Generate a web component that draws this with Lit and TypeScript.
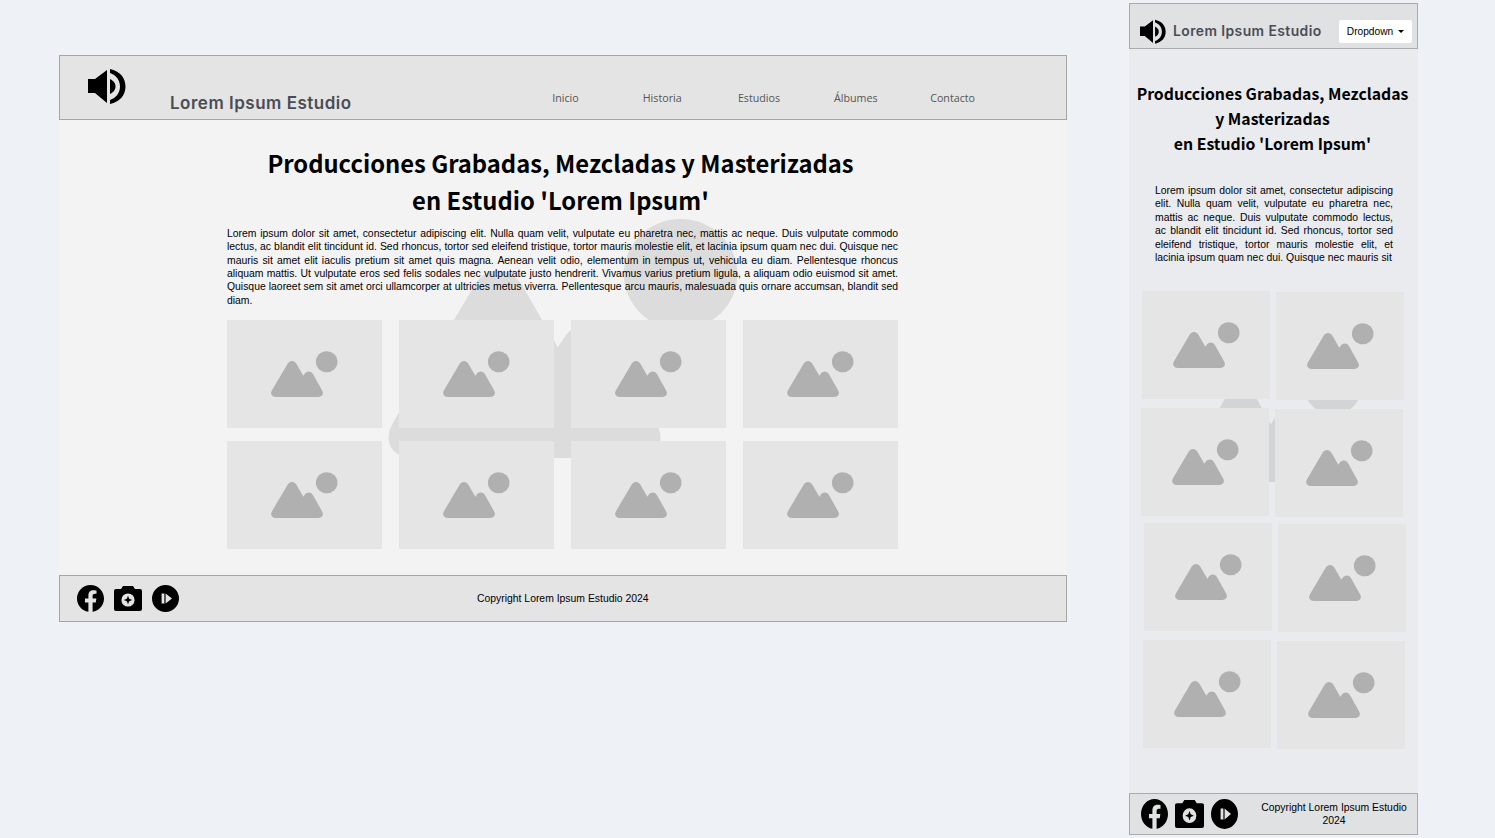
import { LitElement, html, css, svg } from "lit";
import { customElement } from "lit/decorators.js";

const TEXT_DESK =
  "Lorem ipsum dolor sit amet, consectetur adipiscing elit. Nulla quam velit, vulputate eu pharetra nec, mattis ac neque. Duis vulputate commodo lectus, ac blandit elit tincidunt id. Sed rhoncus, tortor sed eleifend tristique, tortor mauris molestie elit, et lacinia ipsum quam nec dui. Quisque nec mauris sit amet elit iaculis pretium sit amet quis magna. Aenean velit odio, elementum in tempus ut, vehicula eu diam. Pellentesque rhoncus aliquam mattis. Ut vulputate eros sed felis sodales nec vulputate justo hendrerit. Vivamus varius pretium ligula, a aliquam odio euismod sit amet. Quisque laoreet sem sit amet orci ullamcorper at ultricies metus viverra. Pellentesque arcu mauris, malesuada quis ornare accumsan, blandit sed diam.";
const TEXT_MOB =
  "Lorem ipsum dolor sit amet, consectetur adipiscing elit. Nulla quam velit, vulputate eu pharetra nec, mattis ac neque. Duis vulputate commodo lectus, ac blandit elit tincidunt id. Sed rhoncus, tortor sed eleifend tristique, tortor mauris molestie elit, et lacinia ipsum quam nec dui. Quisque nec mauris sit";
const NAV = ["Inicio", "Historia", "Estudios", "Álbumes", "Contacto"];

const picture = (cls: string) => html`<svg class=${cls} viewBox="0 0 67 47" preserveAspectRatio="none">
  ${svg`<circle cx="55.7" cy="11" r="10.8"></circle>
  <path d="M5 47H47.5C51.5 47 53 43.5 51 40L42.5 24.5C40.5 20 35.5 20 33.5 23.5L32.3 25.3L26 14C23.5 9 18.5 9 16 14L1 40C-1 43.5 .5 47 5 47Z"></path>`}
</svg>`;

const speaker = (cls: string) => html`<svg class=${cls} viewBox="0 0 38 38">
  ${svg`<path d="M0 11H7L19 2V35L7 25H0Z"></path>
  <path d="M22 11C26 13 27.5 16 27.5 18.5C27.5 21 26 24 22 26Z"></path>
  <path d="M22 1C32 3 37.5 10 37.5 18.5C37.5 27 32 34 22 36V32C28 30 32 25 32 18.5C32 12 28 7 22 5Z"></path>`}
</svg>`;

const facebook = html`<svg class="soc fb" viewBox="8 8 496 496" preserveAspectRatio="none">
  ${svg`<path d="M504 256C504 119 393 8 256 8S8 119 8 256c0 123.78 90.69 226.38 209.25 245V327.69h-63V256h63v-54.64c0-62.15 37-96.48 93.67-96.48 27.14 0 55.52 4.84 55.52 4.84v61h-31.28c-30.8 0-40.41 19.12-40.41 38.73V256h68.78l-11 71.69h-57.78V501C413.31 482.38 504 379.78 504 256z"></path>`}
</svg>`;

const camera = html`<svg class="soc cam" viewBox="0 0 28 25" preserveAspectRatio="none">
  ${svg`<path fill-rule="evenodd" d="M9 0H19L21 3H26C27.2 3 28 3.8 28 5V23C28 24.2 27.2 25 26 25H2C.8 25 0 24.2 0 23V5C0 3.8 .8 3 2 3H7ZM14 7.4A6.6 6.6 0 1 0 14 20.6A6.6 6.6 0 1 0 14 7.4Z"></path>
  <path d="M14 9.8L15.2 12.8L18.2 14L15.2 15.2L14 18.2L12.8 15.2L9.8 14L12.8 12.8Z"></path>`}
</svg>`;

const play = html`<svg class="soc ply" viewBox="0 0 27 27" preserveAspectRatio="none">
  ${svg`<path fill-rule="evenodd" d="M13.5 0A13.5 13.5 0 1 0 13.5 27A13.5 13.5 0 1 0 13.5 0ZM9.6 8.5H12.4V18.5H9.6ZM13.6 8.5L20 13.5L13.6 18.5Z"></path>`}
</svg>`;

@customElement("app-root")
export class AppRoot extends LitElement {
  static styles = css`
    :host {
      display: block;
      min-height: 100vh;
      background: #eef1f6;
      font-family: "Liberation Sans", Arial, sans-serif;
    }

    .canvas {
      display: flex;
      align-items: flex-start;
    }

    .brand {
      font-family: Inter, sans-serif;
      font-weight: 600;
      color: #4a4d55;
    }

    h1 {
      margin: 0;
      font-family: "Noto Sans CJK JP", "Noto Sans", sans-serif;
      font-weight: 700;
      text-align: center;
      color: #000;
    }

    p {
      margin: 0;
      color: #000;
    }

    .soc {
      display: block;
      flex: none;
      fill: #000;
    }

    /* desktop frame */
    .desk {
      width: 1008px;
      margin: 55px 0 0 59px;
    }

    .desk-head {
      box-sizing: border-box;
      height: 65px;
      display: flex;
      border: 1px solid #a5a5a5;
      background: #e4e4e4;
    }

    .desk-logo {
      width: 38px;
      height: 38px;
      margin: 12px 0 0 28px;
      fill: #000;
    }

    .desk-head .brand {
      width: 347px;
      margin: 36px 0 0 44px;
      font-size: 17px;
      line-height: 22px;
      letter-spacing: 0.5px;
    }

    .nav {
      display: flex;
      margin-top: 34px;
    }

    .nav span {
      width: 96.8px;
      text-align: center;
      font: 10.7px/16px "Open Sans", sans-serif;
      color: #555;
    }

    .desk-main {
      position: relative;
      box-sizing: border-box;
      height: 455px;
      padding: 24px 169px 0 168px;
      background: #f3f3f3;
      overflow: hidden;
    }

    .desk-main h1 {
      position: relative;
      padding-right: 4px;
      font-size: 23.75px;
      line-height: 37px;
    }

    .desk-main p {
      position: relative;
      margin-top: 9px;
      font-size: 10.4px;
      line-height: 13.35px;
      text-align: justify;
    }

    .backdrop {
      position: absolute;
      fill: #dcdcdc;
    }

    .desk-main .backdrop {
      left: 329px;
      top: 98px;
      width: 352px;
      height: 240px;
    }

    .desk-grid {
      position: relative;
      display: grid;
      grid-template-columns: repeat(4, 155px);
      grid-auto-rows: 108px;
      column-gap: 17px;
      row-gap: 13px;
      margin-top: 13px;
    }

    .card {
      display: flex;
      align-items: center;
      justify-content: center;
      background: #e5e5e5;
    }

    .pic {
      width: 67px;
      height: 46px;
      fill: #b0b0b0;
    }

    .desk-foot {
      box-sizing: border-box;
      height: 47px;
      display: flex;
      align-items: center;
      gap: 10px;
      padding-left: 17px;
      border: 1px solid #a5a5a5;
      background: #e4e4e4;
    }

    .desk-foot .fb,
    .desk-foot .ply {
      width: 27px;
      height: 27px;
    }

    .desk-foot .cam {
      width: 28px;
      height: 25px;
    }

    .copy {
      font-size: 10.4px;
      line-height: 13px;
      color: #000;
      text-align: center;
    }

    .desk-foot .copy {
      margin-left: 288px;
    }

    /* mobile frame */
    .mob {
      width: 289px;
      margin: 3px 0 0 62px;
    }

    .mob-head {
      box-sizing: border-box;
      height: 46px;
      display: flex;
      align-items: center;
      padding-top: 11px;
      border: 1px solid #a9aaac;
      background: #e0e1e3;
    }

    .mob-logo {
      width: 26px;
      height: 26px;
      margin-left: 10px;
      fill: #000;
    }

    .mob-head .brand {
      width: 166px;
      margin: -2px 0 0 7px;
      font-size: 13.9px;
      line-height: 18px;
      letter-spacing: 0.42px;
    }

    .drop {
      box-sizing: border-box;
      width: 73px;
      height: 23px;
      display: flex;
      align-items: center;
      justify-content: center;
      gap: 5px;
      border-radius: 2px;
      background: #fff;
      font-size: 10.2px;
      color: #000;
    }

    .caret {
      width: 0;
      height: 0;
      border-left: 3px solid transparent;
      border-right: 3px solid transparent;
      border-top: 3px solid #000;
    }

    .mob-main {
      position: relative;
      box-sizing: border-box;
      height: 744px;
      padding-top: 32px;
      background: #eaebee;
      overflow: hidden;
    }

    .mob-main h1 {
      position: relative;
      width: 287px;
      font-size: 15.8px;
      line-height: 25px;
    }

    .mob-main p {
      position: relative;
      width: 238px;
      margin: 28px 0 0 26px;
      font-size: 10.4px;
      line-height: 13.45px;
      text-align: justify;
    }

    .mob-main .backdrop {
      left: 56px;
      top: 308px;
      width: 178px;
      height: 125px;
      fill: #d3d4d6;
    }

    .rows {
      position: relative;
      margin-top: 26px;
    }

    .row {
      display: flex;
      gap: 6px;
    }

    .row .card {
      width: 128px;
      height: 108px;
    }

    .row .card + .card {
      margin-top: 1px;
    }

    .r1 { margin-left: 13px; }
    .r2 { margin: 8px 0 0 12px; }
    .r3 { margin: 6px 0 0 15px; }
    .r4 { margin: 8px 0 0 14px; }

    .mob-foot {
      box-sizing: border-box;
      height: 42px;
      display: flex;
      align-items: center;
      padding-left: 11px;
      border: 1px solid #a9aaac;
      background: #e0e1e3;
    }

    .mob-foot .fb,
    .mob-foot .ply {
      width: 27px;
      height: 30px;
    }

    .mob-foot .cam {
      width: 29px;
      height: 28px;
      margin: 0 7px;
    }

    .mob-foot .copy {
      width: 150px;
      margin-left: 21px;
    }
  `;

  render() {
    return html`
      <div class="canvas">
        <section class="desk">
          <header class="desk-head">
            ${speaker("desk-logo")}
            <div class="brand">Lorem Ipsum Estudio</div>
            <nav class="nav">${NAV.map((n) => html`<span>${n}</span>`)}</nav>
          </header>
          <main class="desk-main">
            ${picture("backdrop")}
            <h1>Producciones Grabadas, Mezcladas y Masterizadas<br />en Estudio 'Lorem Ipsum'</h1>
            <p>${TEXT_DESK}</p>
            <div class="desk-grid">
              ${Array.from({ length: 8 }, () => html`<div class="card">${picture("pic")}</div>`)}
            </div>
          </main>
          <footer class="desk-foot">
            ${facebook}${camera}${play}
            <div class="copy">Copyright Lorem Ipsum Estudio 2024</div>
          </footer>
        </section>

        <section class="mob">
          <header class="mob-head">
            ${speaker("mob-logo")}
            <div class="brand">Lorem Ipsum Estudio</div>
            <div class="drop">Dropdown <span class="caret"></span></div>
          </header>
          <main class="mob-main">
            ${picture("backdrop")}
            <h1>Producciones Grabadas, Mezcladas<br />y Masterizadas<br />en Estudio 'Lorem Ipsum'</h1>
            <p>${TEXT_MOB}</p>
            <div class="rows">
              ${["r1", "r2", "r3", "r4"].map(
                (r) => html`<div class="row ${r}">
                  <div class="card">${picture("pic")}</div>
                  <div class="card">${picture("pic")}</div>
                </div>`
              )}
            </div>
          </main>
          <footer class="mob-foot">
            ${facebook}${camera}${play}
            <div class="copy">Copyright Lorem Ipsum Estudio 2024</div>
          </footer>
        </section>
      </div>
    `;
  }
}
